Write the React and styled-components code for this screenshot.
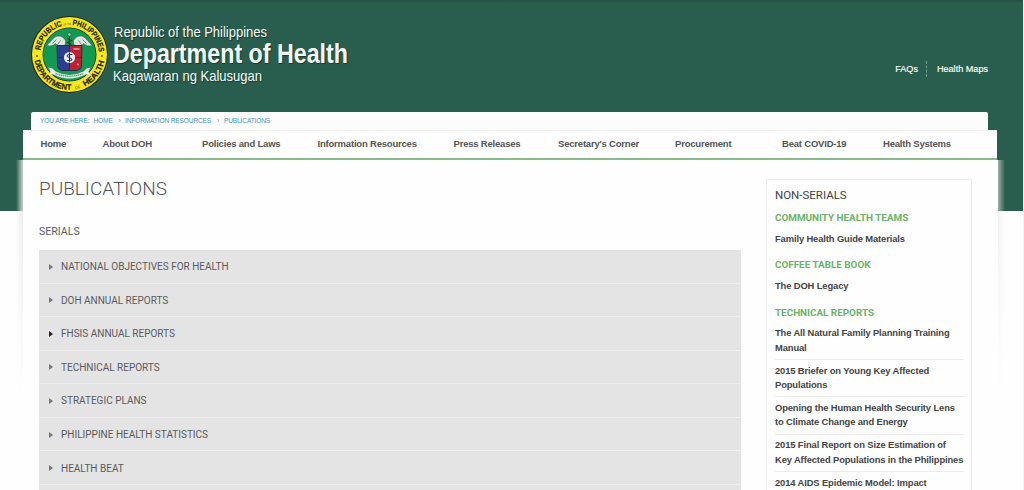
import React from "react";
import styled, { createGlobalStyle } from "styled-components";

const GlobalStyle = createGlobalStyle`
  * { box-sizing: border-box; }
  html, body { margin: 0; padding: 0; }
  body { background: #fefefe; font-family: "Liberation Sans", Arial, sans-serif; overflow: hidden; }
  ul { list-style: none; margin: 0; padding: 0; }
  h1, h2, h3 { margin: 0; font-weight: 400; }
  a { color: inherit; text-decoration: none; }
`;

const Page = styled.div`
  width: 1024px;
  height: 490px;
  overflow: hidden;
  border-right: 1px solid #f4f6f5;
  background: linear-gradient(#24503f 0, #295d4d 3px, #295d4d 211px, #fefefe 211px);
`;

const Header = styled.header`
  display: flex;
  justify-content: space-between;
  height: 112px;
  padding: 14px 35px 0 28px;
`;

const Brand = styled.svg`
  display: block;
  width: 330px;
  height: 86px;
  overflow: visible;
`;

const BrandLine = styled.text`
  fill: #f4fbf8;
  font-family: "Liberation Sans", Arial, sans-serif;
  text-shadow: 1px 1px 1px #173d30;
`;

const TopLinks = styled.nav`
  display: flex;
  height: 16px;
  margin-top: 47px;
  color: #fff;
  font-size: 9.1px;
  line-height: 16px;
  -webkit-text-stroke: 0.15px #fff;
`;

const TopLink = styled.a`
  white-space: nowrap;
  & + & {
    margin-left: 8px;
    padding-left: 10px;
    border-left: 1px dashed #74998c;
  }
`;

const Breadcrumb = styled.div`
  display: flex;
  height: 18px;
  margin: 0 35px 0 31px;
  padding: 0 9px;
  border-radius: 2px 2px 0 0;
  background: #fcfcfc;
  color: #4594be;
  font-size: 6.6px;
  line-height: 17px;
  letter-spacing: -0.15px;
  white-space: nowrap;
`;

const Crumb = styled.span`
  width: ${(p) => p.$width}px;
`;

const MainNav = styled.nav`
  display: flex;
  height: 30px;
  margin: 0 26px 0 23px;
  padding: 0 0 0 17.5px;
  border-top: 1px solid #f3f3f3;
  border-bottom: 2px solid #8cb98a;
  background: #fdfefd;
`;

const NavItem = styled.a`
  width: ${(p) => p.$width}px;
  color: #555;
  font-size: 9.5px;
  font-weight: 700;
  line-height: 26px;
  letter-spacing: -0.2px;
  white-space: nowrap;
`;

const Body = styled.div`
  display: grid;
  grid-template-columns: 7px 975px 7px;
  margin-left: 16px;
  height: 330px;
`;

const Shade = styled.div`
  height: 240px;
  background: linear-gradient(
    to ${(p) => p.$side},
    rgba(235, 238, 236, 0),
    rgba(232, 234, 233, ${(p) => (p.$side === "right" ? 0.85 : 0.6)})
  );
  mask-image: linear-gradient(#000 25%, transparent);
`;

const Content = styled.main`
  display: grid;
  grid-template-columns: 702px 206px;
  column-gap: 25px;
  padding: 0 0 0 16px;
  background: #fefefe;
`;

const Column = styled.section`
  padding-top: 16px;
  font-family: Roboto, sans-serif;
`;

const Title = styled.h1`
  height: 25px;
  color: #555;
  font-size: 19px;
  font-weight: 300;
  line-height: 26px;
`;

const Subtitle = styled.h2`
  height: 16px;
  margin: 22px 0 11px;
  color: #5c5c5c;
  font-size: 10.6px;
  line-height: 17px;
`;

const Accordion = styled.ul`
  background: #e4e4e4;
`;

const AccordionRow = styled.li`
  display: flex;
  align-items: center;
  height: 33.55px;
  padding: 1px 0 0 10px;
  border-bottom: 1px solid #eeeeee;
  color: #5a5a5d;
  font-size: 10px;
  &::before {
    content: "";
    margin-right: 8px;
    border: 3px solid transparent;
    border-left: 4px solid ${(p) => (p.$active ? "#222" : "#777")};
    border-right: 0;
  }
`;

const Sidebar = styled.aside`
  height: 311px;
  overflow: hidden;
  margin-top: 19px;
  padding: 5px 7px 0 8px;
  border: 1px solid #ececec;
  border-bottom: 0;
`;

const SideTitle = styled.h2`
  color: #444;
  font: 400 11.5px/20px Roboto, sans-serif;
`;

const Group = styled.div`
  margin-bottom: 2.2px;
`;

const GroupTitle = styled.h3`
  height: 23.2px;
  padding-top: 3px;
  color: #6ab368;
  font: 700 9.9px/20px Roboto, sans-serif;
`;

const LinkItem = styled.li`
  padding: 3.7px 0 3.8px;
  color: #444;
  font-size: 9.4px;
  font-weight: 700;
  line-height: 14.4px;
  letter-spacing: -0.12px;
  white-space: nowrap;
  & + & { border-top: 1px solid #ececec; }
`;

const Line = styled.span`
  display: block;
`;

const navigation = [
  ["Home", 62],
  ["About DOH", 99.5],
  ["Policies and Laws", 115.5],
  ["Information Resources", 136],
  ["Press Releases", 104.5],
  ["Secretary's Corner", 117],
  ["Procurement", 107],
  ["Beat COVID-19", 101],
  ["Health Systems", 90],
];

const serials = [
  "NATIONAL OBJECTIVES FOR HEALTH",
  "DOH ANNUAL REPORTS",
  "FHSIS ANNUAL REPORTS",
  "TECHNICAL REPORTS",
  "STRATEGIC PLANS",
  "PHILIPPINE HEALTH STATISTICS",
  "HEALTH BEAT",
];

const groups = [
  { title: "COMMUNITY HEALTH TEAMS", items: [["Family Health Guide Materials"]] },
  { title: "COFFEE TABLE BOOK", items: [["The DOH Legacy"]] },
  {
    title: "TECHNICAL REPORTS",
    items: [
      ["The All Natural Family Planning Training", "Manual"],
      ["2015 Briefer on Young Key Affected", "Populations"],
      ["Opening the Human Health Security Lens", "to Climate Change and Energy"],
      ["2015 Final Report on Size Estimation of", "Key Affected Populations in the Philippines"],
      ["2014 AIDS Epidemic Model: Impact"],
    ],
  },
];

const AccordionEnd = styled.li`
  height: 6px;
`;

function Seal() {
  return (
    <g transform="translate(41.5 40.5)">
      <circle r="38.5" fill="#1d2a18" />
      <circle r="37.5" fill="#f6e61c" />
      <circle r="27" fill="#22332a" />
      <circle r="26.2" fill="#139a52" />
      <defs>
        <path id="sealTop" d="M-29.5 0A29.5 29.5 0 0 1 29.5 0" />
        <path id="sealBottom" d="M-35.3 0A35.3 35.3 0 0 0 35.3 0" />
      </defs>
      <g fill="#25230f" fontFamily="Liberation Sans, sans-serif" fontWeight="700" fontSize="8">
        <g stroke="#25230f" strokeWidth="0.2">
          <text><textPath href="#sealTop" startOffset="4" textLength="35" lengthAdjust="spacingAndGlyphs">REPUBLIC</textPath></text>
          <text><textPath href="#sealTop" startOffset="49" textLength="41" lengthAdjust="spacingAndGlyphs">PHILIPPINES</textPath></text>
          <text><textPath href="#sealBottom" startOffset="6" textLength="51" lengthAdjust="spacingAndGlyphs">DEPARTMENT</textPath></text>
          <text><textPath href="#sealBottom" startOffset="71" textLength="33" lengthAdjust="spacingAndGlyphs">HEALTH</textPath></text>
        </g>
        <text fontSize="3" fill="#8b8420"><textPath href="#sealTop" startOffset="40" textLength="8" lengthAdjust="spacingAndGlyphs">OF THE</textPath></text>
        <text fontSize="4" fill="#8b8420"><textPath href="#sealBottom" startOffset="61" textLength="6">OF</textPath></text>
      </g>
      <circle cx="-32.5" cy="1.5" r="0.9" fill="#55511a" />
      <circle cx="32.5" cy="1.5" r="0.9" fill="#55511a" />
      <path d="M-4-14c-2-4-7-6-11-3-3 2-4 5-8 8 4 1 7 0 9-2 2 3 7 3 10 1zM4-14c2-4 7-6 11-3 3 2 4 5 8 8-4 1-7 0-9-2-2 3-7 3-10 1z" fill="#dce7e2" stroke="#3d5f50" strokeWidth="0.6" />
      <path d="M-17-11l4-4M-12-10l3-4M17-11l-4-4M12-10l-3-4" stroke="#5c7569" strokeWidth="0.8" />
      <path d="M0-20v11M-2-16l4 2-4 2 4 2" fill="none" stroke="#1d3c2c" strokeWidth="1.2" />
      <circle cy="-20" r="1.8" fill="#a9bfae" stroke="#23402f" strokeWidth="0.6" />
      <path d="M-12.5-9H0v25h-7q-5-1-5-5z" fill="#2b3f91" stroke="#202642" strokeWidth="0.9" />
      <path d="M0-9h12.5L12 11q0 4-5 5H0z" fill="#bb2335" stroke="#202642" strokeWidth="0.9" />
      <path d="M-12 3H12M0-9v25" stroke="#252b50" strokeWidth="0.8" />
      <path d="M4-5.5h6M8 9l1 2" stroke="#e2a19a" strokeWidth="1.3" />
      <circle cy="3" r="5.6" fill="#e9eaf0" />
      <path d="M0-2v10M2.8 0h-3q-3 0-2 2l4 2q2 2-1 2h-3" fill="none" stroke="#202b42" strokeWidth="1" />
      <path d="M-21 13l4 1 3 3q14 7 28 0l3-3 4-1-2 4 1 3-4 0q-16 8-32 0l-4 0 1-3z" fill="#e7eeea" />
      <path d="M-14 18.8q14 6 28 0" fill="none" stroke="#668b78" strokeWidth="1.3" strokeDasharray="1.4 0.5" />
    </g>
  );
}

const brandLines = [
  { label: "Republic of the Philippines", x: 86, y: 23, size: 15, width: 153, weight: 400 },
  { label: "Department of Health", x: 85, y: 49, size: 27.5, width: 235, weight: 700 },
  { label: "Kagawaran ng Kalusugan", x: 85, y: 66.5, size: 15, width: 149, weight: 400 },
];

function Wordmark() {
  return brandLines.map((l) => (
    <BrandLine
      key={l.label}
      x={l.x}
      y={l.y}
      fontSize={l.size}
      fontWeight={l.weight}
      textLength={l.width}
      lengthAdjust="spacingAndGlyphs"
    >
      {l.label}
    </BrandLine>
  ));
}

export default function App() {
  return (
    <>
      <GlobalStyle />
      <Page>
        <Header>
          <Brand viewBox="0 0 330 86">
            <Seal />
            <Wordmark />
          </Brand>
          <TopLinks>
            <TopLink href="#">FAQs</TopLink>
            <TopLink href="#">Health Maps</TopLink>
          </TopLinks>
        </Header>
        <Breadcrumb>
          <Crumb $width={53.5}>YOU ARE HERE:</Crumb>
          <Crumb $width={25}>HOME</Crumb>
          <Crumb $width={6.5}>›</Crumb>
          <Crumb $width={92}>INFORMATION RESOURCES</Crumb>
          <Crumb $width={7}>›</Crumb>
          <Crumb $width={50}>PUBLICATIONS</Crumb>
        </Breadcrumb>
        <MainNav>
          {navigation.map(([label, width]) => (
            <NavItem key={label} href="#" $width={width}>{label}</NavItem>
          ))}
        </MainNav>
        <Body>
          <Shade $side="right" />
          <Content>
            <Column>
              <Title>PUBLICATIONS</Title>
              <Subtitle>SERIALS</Subtitle>
              <Accordion>
                {serials.map((label) => (
                  <AccordionRow key={label} $active={label.startsWith("FHSIS")}>{label}</AccordionRow>
                ))}
                <AccordionEnd />
              </Accordion>
            </Column>
            <Sidebar>
              <SideTitle>NON-SERIALS</SideTitle>
              {groups.map((group) => (
                <Group key={group.title}>
                  <GroupTitle>{group.title}</GroupTitle>
                  <ul>
                    {group.items.map((lines) => (
                      <LinkItem key={lines[0]}>
                        {lines.map((line) => <Line key={line}>{line}</Line>)}
                      </LinkItem>
                    ))}
                  </ul>
                </Group>
              ))}
            </Sidebar>
          </Content>
          <Shade $side="left" />
        </Body>
      </Page>
    </>
  );
}
